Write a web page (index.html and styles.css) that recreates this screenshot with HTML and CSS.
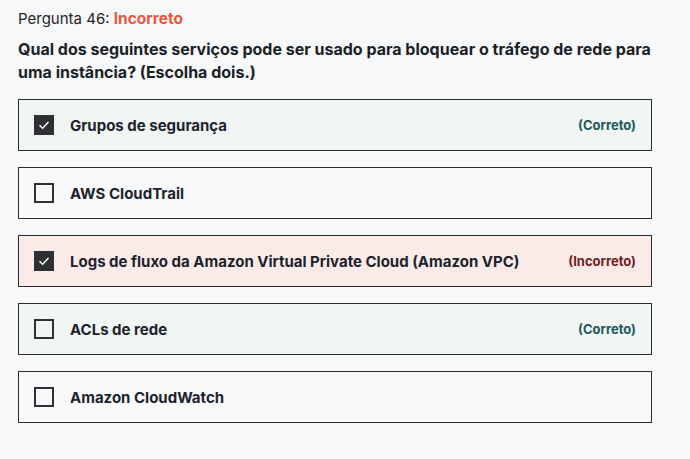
FILE: index.html
```html
<!DOCTYPE html>
<html lang="pt">
<head>
<meta charset="utf-8">
<link rel="stylesheet" href="styles.css">
</head>
<body>
<div class="page">
  <div class="head">Pergunta 46: <span class="status">Incorreto</span></div>
  <div class="question">Qual dos seguintes serviços pode ser usado para bloquear o tráfego de rede para uma instância? (Escolha dois.)</div>
  <div class="options">
    <div class="opt correct">
      <span class="cb checked"><svg viewBox="0 0 20 20" width="20" height="20"><path d="M5.5 10.2 L8.6 13.2 L14.5 7" fill="none" stroke="#fff" stroke-width="1.5"/></svg></span>
      <span class="label">Grupos de segurança</span>
      <span class="tag tag-ok">(Correto)</span>
    </div>
    <div class="opt">
      <span class="cb"></span>
      <span class="label">AWS CloudTrail</span>
    </div>
    <div class="opt wrong">
      <span class="cb checked"><svg viewBox="0 0 20 20" width="20" height="20"><path d="M5.5 10.2 L8.6 13.2 L14.5 7" fill="none" stroke="#fff" stroke-width="1.5"/></svg></span>
      <span class="label">Logs de fluxo da Amazon Virtual Private Cloud (Amazon VPC)</span>
      <span class="tag tag-bad">(Incorreto)</span>
    </div>
    <div class="opt correct">
      <span class="cb"></span>
      <span class="label">ACLs de rede</span>
      <span class="tag tag-ok">(Correto)</span>
    </div>
    <div class="opt">
      <span class="cb"></span>
      <span class="label">Amazon CloudWatch</span>
    </div>
  </div>
</div>
</body>
</html>
```
FILE: styles.css
```css
html, body {
  margin: 0;
  padding: 0;
  background: #f7f8fa;
}
.page {
  padding: 8px 38px 0 18px;
  font-family: Inter, "Open Sans", sans-serif;
  color: #16191f;
}
.head {
  font-size: 15px;
  line-height: 22px;
  color: #232323;
}
.status {
  color: #e8573b;
  font-weight: 700;
  font-size: 15.5px;
}
.question {
  margin-top: 8px;
  font-size: 16px;
  line-height: 23px;
  font-weight: 700;
  color: #1b1f26;
}
.options {
  margin-top: 15px;
  display: flex;
  flex-direction: column;
  gap: 16px;
}
.opt {
  height: 50px;
  border: 1px solid #2b2c30;
  display: flex;
  align-items: center;
  padding: 0 15px;
  background: #f8f9fa;
}
.opt.correct { background: #f1f5f4; }
.opt.wrong { background: #fbebe8; }
.cb {
  width: 16px;
  height: 16px;
  border: 2px solid #2f3034;
  flex: none;
  display: flex;
  align-items: center;
  justify-content: center;
}
.cb.checked {
  background: #2f3034;
}
.cb svg { flex: none; }
.label {
  margin-left: 16px;
  font-size: 15px;
  font-weight: 700;
  color: #1d232d;
  flex: 1;
}
.tag {
  font-size: 13px;
  font-weight: 700;
}
.tag-ok { color: #1c5a5a; }
.tag-bad { color: #6e1e22; }
```
